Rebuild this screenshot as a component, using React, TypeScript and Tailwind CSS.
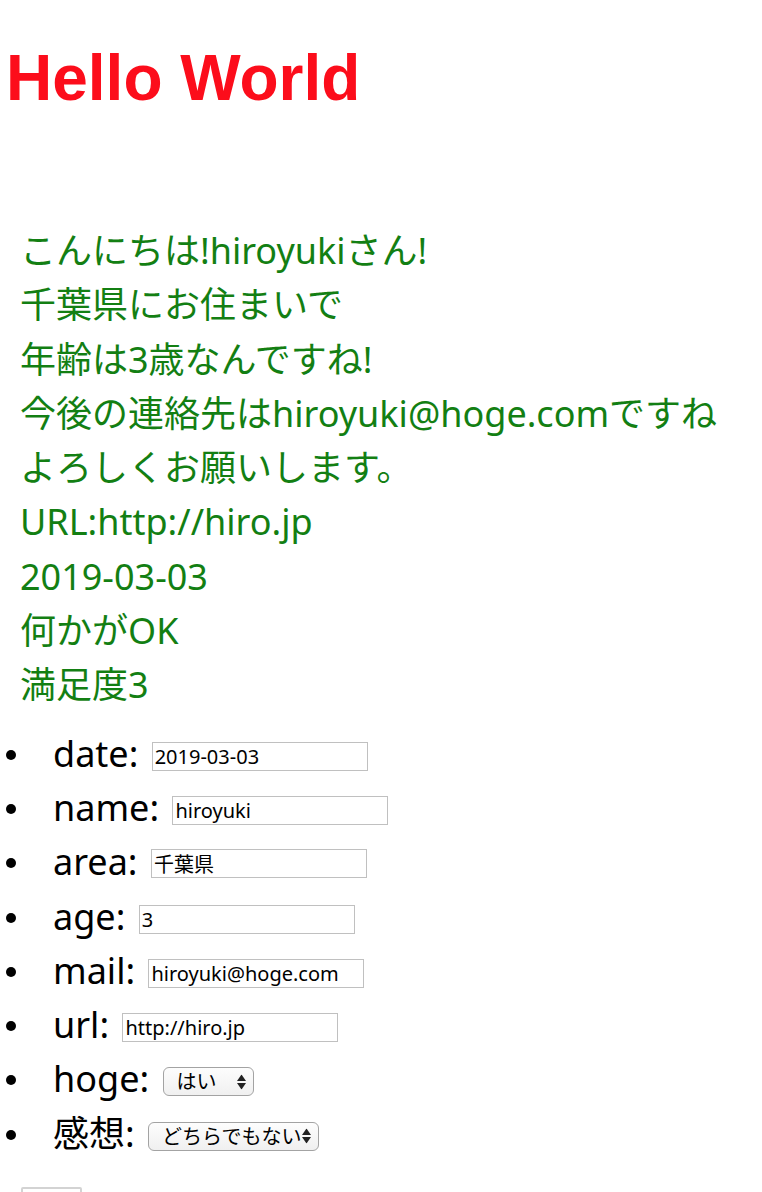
import { useState } from 'react'

const INPUT_CLASS =
  'ml-[4px] h-[29px] w-[216px] border border-[#c0c0c0] bg-white px-[2px] align-[3px] text-[20px] leading-[25px] text-black outline-none'

function Select({
  options,
  value,
  onChange,
  width,
}: {
  options: string[]
  value: string
  onChange: (v: string) => void
  width: string
}) {
  return (
    <span className="relative ml-[4px] inline-flex items-center align-[3px]">
      <select
        className={`${width} h-[29px] appearance-none rounded-[6px] border border-[#a3a3a3] bg-gradient-to-b from-[#fdfdfd] to-[#f0f0f0] pl-[13px] pr-0 text-[20px] leading-[25px] text-black outline-none`}
        onChange={e => {
          onChange(e.target.value)
        }}
        value={value}
      >
        {options.map(o => (
          <option key={o} value={o}>
            {o}
          </option>
        ))}
      </select>
      <svg
        aria-hidden
        className="pointer-events-none absolute right-[8px] top-1/2 h-[15px] w-[9px] -translate-y-1/2"
        viewBox="0 0 9 15"
      >
        <path d="M4.5 0 L9 6.5 L0 6.5 Z" fill="#222" />
        <path d="M4.5 15 L9 8.5 L0 8.5 Z" fill="#222" />
      </svg>
    </span>
  )
}

function Bullet() {
  return (
    <span className="mr-[37px] inline-block size-[10px] rounded-full bg-black align-[7px]" />
  )
}

export default function App() {
  const [form, setForm] = useState({
    date: '2019-03-03',
    name: 'hiroyuki',
    area: '千葉県',
    age: '3',
    mail: 'hiroyuki@hoge.com',
    url: 'http://hiro.jp',
    hoge: 'はい',
    feel: 'どちらでもない',
  })

  const set = (key: keyof typeof form) => (v: string) => {
    setForm(f => ({ ...f, [key]: v }))
  }

  const fields: { key: keyof typeof form; label: string }[] = [
    { key: 'date', label: 'date' },
    { key: 'name', label: 'name' },
    { key: 'area', label: 'area' },
    { key: 'age', label: 'age' },
    { key: 'mail', label: 'mail' },
    { key: 'url', label: 'url' },
  ]

  const satisfaction = form.feel === '満足' ? 5 : form.feel === '不満' ? 1 : 3

  return (
    <div className="min-h-screen bg-white font-['Noto_Sans','Noto_Sans_CJK_JP',sans-serif] text-black">
      <h1 className="ml-[6px] mt-[41px] font-['Liberation_Sans','Noto_Sans_CJK_JP',sans-serif] text-[64px] font-bold leading-[74px] text-[#fc0d1b]">
        Hello World
      </h1>

      {/* Greeting */}
      <div className="mt-[109px] pl-[20px] text-[36px] leading-[54.3px] text-[#137f13]">
        <p>こんにちは!{form.name}さん!</p>
        <p>{form.area}にお住まいで</p>
        <p>年齢は{form.age}歳なんですね!</p>
        <p>今後の連絡先は{form.mail}ですね</p>
        <p>よろしくお願いします。</p>
        <p>URL:{form.url}</p>
        <p>{form.date}</p>
        <p>何かが{form.hoge === 'はい' ? 'OK' : 'NG'}</p>
        <p>満足度{satisfaction}</p>
      </div>

      {/* Form */}
      <form
        onSubmit={e => {
          e.preventDefault()
        }}
      >
        <ul className="mt-[14px] text-[36px] leading-[54.3px]">
          {fields.map(f => (
            <li className="pl-[6px]" key={f.key}>
              <Bullet />
              {f.label}:{' '}
              <input
                className={INPUT_CLASS}
                onChange={e => {
                  set(f.key)(e.target.value)
                }}
                type="text"
                value={form[f.key]}
              />
            </li>
          ))}
          <li className="pl-[6px]">
            <Bullet />
            hoge:{' '}
            <Select
              onChange={set('hoge')}
              options={['はい', 'いいえ']}
              value={form.hoge}
              width="w-[91px]"
            />
          </li>
          <li className="pl-[6px]">
            <Bullet />
            感想:{' '}
            <Select
              onChange={set('feel')}
              options={['満足', 'どちらでもない', '不満']}
              value={form.feel}
              width="w-[171px]"
            />
          </li>
        </ul>
        <button
          className="ml-[21px] mt-[26px] h-[64px] w-[61px] rounded-[2px] border-2 border-[#d3d3d3] bg-white text-[20px] leading-[25px]"
          type="submit"
        >
          送信
        </button>
      </form>
    </div>
  )
}
